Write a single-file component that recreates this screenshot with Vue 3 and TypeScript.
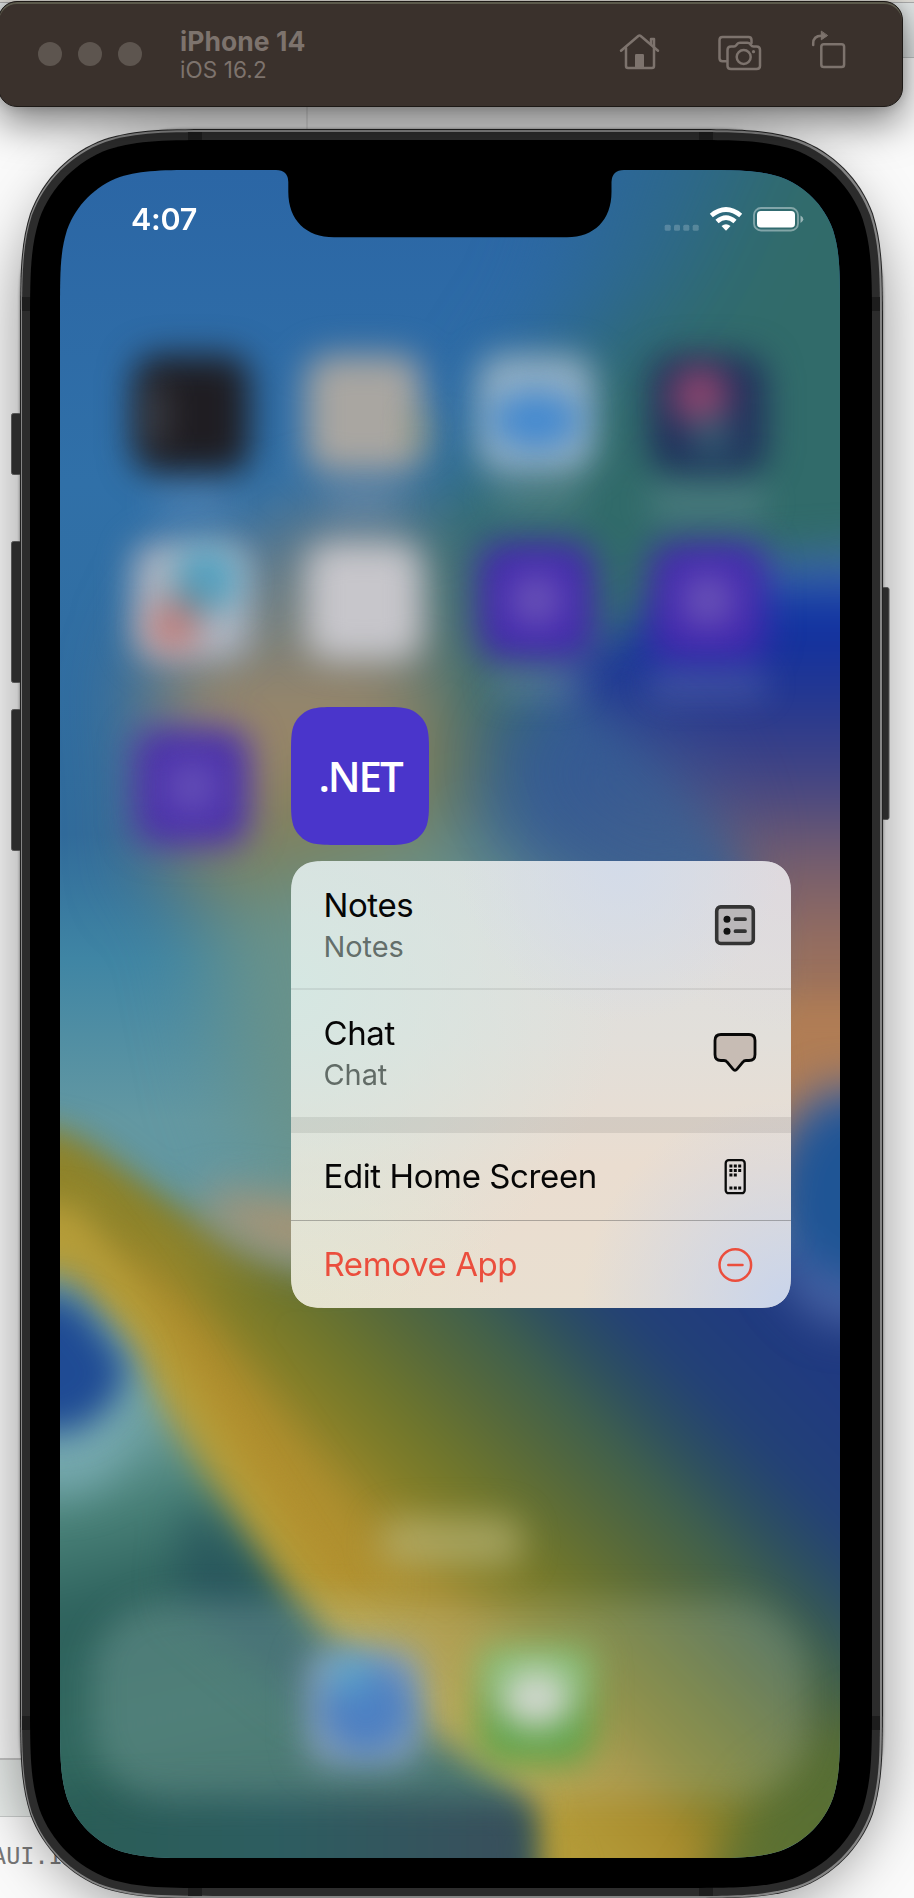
<script setup lang="ts">
interface AppTile { x: number; y: number; fill: string }
interface MenuItem { title: string; note?: string; icon: 'notes' | 'chat' | 'phone' | 'remove'; kind: string }

/* Rounded rectangle with continuous corners, as iOS draws them. */
function squircle(x: number, y: number, w: number, h: number, r: number): string {
  const a = 1.528665 * r, b = 1.088493 * r, c = 0.868407 * r, d = 0.631494 * r
  const e = 0.372824 * r, f = 0.16906 * r, g = 0.074911 * r
  const R = x + w, B = y + h
  return [
    `M${x + a} ${y}H${R - a}`,
    `C${R - b} ${y} ${R - c} ${y} ${R - d} ${y + g}C${R - e} ${y + f} ${R - f} ${y + e} ${R - g} ${y + d}C${R} ${y + c} ${R} ${y + b} ${R} ${y + a}`,
    `V${B - a}`,
    `C${R} ${B - b} ${R} ${B - c} ${R - g} ${B - d}C${R - f} ${B - e} ${R - e} ${B - f} ${R - d} ${B - g}C${R - c} ${B} ${R - b} ${B} ${R - a} ${B}`,
    `H${x + a}`,
    `C${x + b} ${B} ${x + c} ${B} ${x + d} ${B - g}C${x + e} ${B - f} ${x + f} ${B - e} ${x + g} ${B - d}C${x} ${B - c} ${x} ${B - b} ${x} ${B - a}`,
    `V${y + a}`,
    `C${x} ${y + b} ${x} ${y + c} ${x + g} ${y + d}C${x + f} ${y + e} ${x + e} ${y + f} ${x + d} ${y + g}C${x + c} ${y} ${x + b} ${y} ${x + a} ${y}Z`,
  ].join('')
}

const shell = squircle(20, 129, 863, 1769.5, 134)
const rim = squircle(21, 130, 861, 1768, 133)
const band = squircle(22, 132, 858, 1764, 132)
const bezel = squircle(30, 140, 842, 1748, 125)
const screenClip = `path('${squircle(0, 0, 780, 1688, 94.7)}')`
const iconClip = `path('${squircle(0, 0, 138, 138, 31)}')`
const menuClip = `path('${squircle(0, 0, 500, 447, 27)}')`

const tiles: AppTile[] = [
  { x: 192, y: 414, fill: '#1f1d22' },
  { x: 364, y: 414, fill: '#a9a6a1' },
  { x: 536, y: 414, fill: '#98b2c4' },
  { x: 708, y: 414, fill: '#20305c' },
  { x: 192, y: 601, fill: '#b2b7c2' },
  { x: 364, y: 601, fill: '#c7c6cb' },
  { x: 536, y: 601, fill: '#452aae' },
  { x: 708, y: 601, fill: '#452aae' },
  { x: 192, y: 787, fill: '#4b31ab' },
]

const items: MenuItem[] = [
  { title: 'Notes', note: 'Notes', icon: 'notes', kind: 'tall ruled' },
  { title: 'Chat', note: 'Chat', icon: 'chat', kind: 'tall section' },
  { title: 'Edit Home Screen', icon: 'phone', kind: 'hair' },
  { title: 'Remove App', icon: 'remove', kind: 'danger' },
]
</script>

<template>
  <div class="desktop">
    <div class="strip"></div>
    <div class="pane"><span class="code">AUI.I</span></div>
    <div class="divider"></div>
    <div class="phone-shadow"></div>
    <svg class="frame" viewBox="0 0 914 1898">
      <g fill="#2b2b2b" stroke="#555" stroke-width="1">
        <rect x="11.5" y="413.5" width="14" height="61" rx="2" />
        <rect x="11.5" y="541.5" width="14" height="141" rx="2" />
        <rect x="11.5" y="709.5" width="14" height="141" rx="2" />
        <rect x="876" y="587.5" width="13" height="232" rx="2" />
      </g>
      <path :d="shell" fill="#222" />
      <path :d="rim" fill="#858585" />
      <path :d="band" fill="#2c2c2c" />
      <g fill="#1d1d1d">
        <rect x="188" y="132" width="14" height="9" /><rect x="699" y="132" width="14" height="9" />
        <rect x="188" y="1887" width="14" height="9" /><rect x="699" y="1887" width="14" height="9" />
        <rect x="22" y="297" width="9" height="14" /><rect x="22" y="1716" width="9" height="14" />
        <rect x="871" y="297" width="9" height="14" /><rect x="871" y="1716" width="9" height="14" />
      </g>
      <path :d="bezel" fill="#000" />
    </svg>

    <header class="toolbar">
      <i class="light"></i><i class="light"></i><i class="light"></i>
      <div class="device">
        <div class="name">iPhone 14</div>
        <div class="os">iOS 16.2</div>
      </div>
      <svg class="tools" viewBox="610 20 250 70" fill="none" stroke="#7d736d" stroke-width="2.5" stroke-linecap="round" stroke-linejoin="round">
        <path d="M621 50.8 638.3 36Q639.5 35 640.7 36L658 50.8" />
        <path d="M626 48V66Q626 68 628 68H652Q654 68 654 66V39H651V44" />
        <path d="M635 68V55.2Q635 54 636.2 54H642.8Q644 54 644 55.2V68Z" fill="#7d736d" stroke="none" />
        <path d="M726 61.3H722.5Q719.5 61.3 719.5 58.3V40Q719.5 37 722.5 37H748.5Q751.5 37 751.5 40V43" />
        <path d="M731 46.5H734Q735.5 46.5 736.3 45.2L737.2 44Q738.2 42.7 740 42.7H747.5Q749.3 42.7 750.2 44L751 45.2Q751.8 46.5 753.5 46.5H756.5Q760 46.5 760 50V66Q760 69 756.5 69H731Q727.5 69 727.5 66V50Q727.5 46.5 731 46.5Z" />
        <circle cx="743.7" cy="57" r="7" /><circle cx="753.5" cy="51.7" r="1.6" fill="#7d736d" stroke="none" />
        <rect x="821.3" y="44.2" width="22.8" height="22.8" rx="2.6" />
        <path d="M813.2 45V43.5Q813.2 35.7 821.5 35.7" />
        <path d="M821.3 31.5V39.8L827.3 35.7Z" fill="#7d736d" stroke-width="1" />
      </svg>
    </header>

    <main class="screen" :style="{ clipPath: screenClip }">
      <svg class="wallpaper" viewBox="60 170 780 1688">
        <defs>
          <filter id="b14" filterUnits="userSpaceOnUse" x="-200" y="-100" width="1300" height="2200" color-interpolation-filters="sRGB"><feGaussianBlur stdDeviation="17" /></filter>
          <filter id="b22" filterUnits="userSpaceOnUse" x="-200" y="-100" width="1300" height="2200" color-interpolation-filters="sRGB"><feGaussianBlur stdDeviation="22" /></filter>
          <filter id="b40" filterUnits="userSpaceOnUse" x="-200" y="-100" width="1300" height="2200" color-interpolation-filters="sRGB"><feGaussianBlur stdDeviation="42" /></filter>
          <linearGradient id="sky" gradientUnits="userSpaceOnUse" x1="0" y1="170" x2="0" y2="1120">
            <stop offset="0" stop-color="#2b66a5" /><stop offset=".33" stop-color="#3070a8" /><stop offset=".7" stop-color="#316b9b" />
            <stop offset=".83" stop-color="#3f85a4" /><stop offset="1" stop-color="#6398a2" />
          </linearGradient>
          <linearGradient id="east" gradientUnits="userSpaceOnUse" x1="840" y1="540" x2="840" y2="1120">
            <stop offset="0" stop-color="#5585a8" /><stop offset=".05" stop-color="#3c68a8" /><stop offset=".13" stop-color="#0d30a4" /><stop offset=".28" stop-color="#26388f" />
            <stop offset=".42" stop-color="#464682" /><stop offset=".55" stop-color="#745d6e" /><stop offset=".7" stop-color="#966e5f" />
            <stop offset="1" stop-color="#b5804f" />
          </linearGradient>
          <linearGradient id="centre" gradientUnits="userSpaceOnUse" x1="560" y1="700" x2="600" y2="880">
            <stop offset="0" stop-color="#2a5799" /><stop offset=".5" stop-color="#385892" /><stop offset="1" stop-color="#4c658c" />
          </linearGradient>
          <linearGradient id="land" gradientUnits="userSpaceOnUse" x1="300" y1="1560" x2="655" y2="1205">
            <stop offset="0" stop-color="#b39a38" /><stop offset=".14" stop-color="#a98c2d" /><stop offset=".24" stop-color="#857f28" />
            <stop offset=".35" stop-color="#6f762c" /><stop offset=".48" stop-color="#56693b" /><stop offset=".6" stop-color="#40604c" />
            <stop offset=".7" stop-color="#2d4f60" /><stop offset=".81" stop-color="#234176" /><stop offset="1" stop-color="#203a80" />
          </linearGradient>
          <linearGradient id="teal" gradientUnits="userSpaceOnUse" x1="60" y1="1440" x2="160" y2="1858">
            <stop offset="0" stop-color="#6c9f9f" /><stop offset=".18" stop-color="#4a8279" /><stop offset=".4" stop-color="#2e625d" />
            <stop offset=".7" stop-color="#32685f" /><stop offset="1" stop-color="#2a5c56" />
          </linearGradient>
          <linearGradient id="base" gradientUnits="userSpaceOnUse" x1="60" y1="0" x2="540" y2="0">
            <stop offset="0" stop-color="#2a5d56" /><stop offset=".45" stop-color="#2d5d60" /><stop offset="1" stop-color="#3a4d5b" />
          </linearGradient>
        </defs>

        <rect x="0" y="100" width="900" height="1900" fill="url(#sky)" />
        <g filter="url(#b40)">
          <path d="M770 0H1000V620H650L520 800 400 820 430 620 440 500 560 400 660 260Z" fill="#316b6a" />
          <path d="M620 60H820L700 300 560 400 470 440 560 300Z" fill="#2d688a" opacity=".7" />
          <path d="M280 520 420 500 450 640 420 780 200 800 170 620Z" fill="#6e7d80" />
          <path d="M150 660 410 650 430 760 360 860 170 850Z" fill="#98866a" />
          <path d="M400 740 470 680 470 760 440 890 230 900 140 860Z" fill="#7d7f59" />
          <path d="M200 900 380 850 520 800 760 880 760 1320 320 1280 240 1100Z" fill="#69928a" />
          <path d="M600 620H860V900L720 960 560 900 470 830 520 700Z" fill="#385f92" />
        </g>
        <g filter="url(#b22)">
          <path d="M560 680 640 630 740 560 1000 545V1200H760V900L720 840 620 740Z" fill="url(#east)" />
        </g>
        <path d="M510 760 570 700 660 720 700 770 730 860 700 900 560 830Z" fill="url(#centre)" opacity=".75" filter="url(#b40)" />
        <g filter="url(#b14)">
          <path d="M0 1130 60 1135 150 1195 230 1245 330 1275 420 1250 760 1240H1000V2000H0Z" fill="url(#land)" />
        </g>
        <g filter="url(#b22)">
          <path d="M210 1190 330 1205 345 1262 270 1258 200 1215Z" fill="#b09570" opacity=".9" />
          <path d="M-20 1130 80 1150 170 1220 250 1290 190 1280 0 1190Z" fill="#8f842b" />
          <path d="M110 1230 180 1290 300 1470 390 1590 300 1610 200 1450Z" fill="#b38f2d" opacity=".75" />
          <path d="M880 1700V1920H680L760 1790Z" fill="#566e34" opacity=".85" />
        </g>
        <path d="M760 1000H900V1230H780Z" fill="#b07d55" filter="url(#b14)" />
        <g filter="url(#b22)">
          <ellipse cx="850" cy="1205" rx="84" ry="120" fill="#4b64a5" />
          <ellipse cx="858" cy="1192" rx="80" ry="92" fill="#1f5595" />
        </g>
        <g filter="url(#b14)">
          <path d="M-40 1215 75 1205 140 1290 240 1460 330 1600 400 1680 540 1785 580 1920H500L260 1620 150 1420 80 1270 -40 1275Z" fill="#b59d39" />
          <path d="M-40 1278 70 1276 118 1340 180 1435 280 1590 380 1700 500 1780 530 1810 530 1920H-40Z" fill="url(#teal)" />
        </g>
        <g filter="url(#b22)">
          <path d="M190 1500 290 1620 390 1740 300 1700 180 1600Z" fill="#29575d" />
          <ellipse cx="62" cy="1406" rx="74" ry="86" fill="#76a9af" />
        </g>
        <g filter="url(#b14)">
          <path d="M-20 1296H70L98 1325 128 1368 110 1408 74 1432H-20Z" fill="#1f4b94" />
          <path d="M-40 1800 300 1790 528 1800 532 1920H-40Z" fill="url(#base)" />
        </g>
        <g filter="url(#b14)"><rect x="92" y="1600" width="716" height="200" rx="76" fill="#c6e3e0" opacity=".2" /></g>
        <g filter="url(#b14)"><rect x="380" y="1517" width="142" height="50" rx="20" fill="#bbb87d" opacity=".62" /></g>

        <g filter="url(#b14)">
          <rect v-for="t in tiles" :key="`${t.x}-${t.y}`" :x="t.x - 58" :y="t.y - 59" width="116" height="118" rx="24" :fill="t.fill" />
          <rect x="306" y="1648" width="116" height="118" rx="24" fill="#869fb6" />
          <rect x="478" y="1646" width="116" height="118" rx="24" fill="#5fa44b" />
          <path d="M480 1646H592V1694H480Z" fill="#83bd75" />
        </g>
        <g filter="url(#b14)" opacity=".8">
          <rect x="146" y="385" width="18" height="60" fill="#55565c" />
          <ellipse cx="536" cy="420" rx="46" ry="30" fill="#2f7fd2" />
          <circle cx="700" cy="396" r="30" fill="#a84a73" />
          <circle cx="712" cy="438" r="22" fill="#376a78" />
          <circle cx="206" cy="580" r="34" fill="#3a9fc4" />
          <circle cx="174" cy="626" r="26" fill="#cb7068" />
          <circle cx="190" cy="600" r="18" fill="#55707c" opacity=".7" />
          <circle cx="536" cy="600" r="27" fill="#745fba" />
          <circle cx="708" cy="600" r="27" fill="#745fba" />
          <circle cx="192" cy="787" r="27" fill="#6b57ba" />
          <rect x="413" y="410" width="12" height="42" fill="#a5a15f" />
          <circle cx="366" cy="1708" r="46" fill="#3f78c6" />
          <circle cx="350" cy="1674" r="20" fill="#4fa8d0" />
          <ellipse cx="536" cy="1699" rx="37" ry="29" fill="#eee4f0" />
        </g>
        <g filter="url(#b14)" opacity=".2" fill="#cfd0e8">
          <rect x="155" y="490" width="74" height="26" /><rect x="327" y="490" width="74" height="26" />
          <rect x="492" y="485" width="90" height="26" /><rect x="650" y="490" width="116" height="26" />
          <rect x="492" y="672" width="90" height="26" /><rect x="650" y="672" width="116" height="26" />
        </g>
      </svg>

      <svg class="notch" viewBox="276 168 348 70">
        <path d="M276 168V170Q288 170 288.3 182V192C288.3 220 306 237.3 334 237.3H567C594 237.3 611.5 220 611.5 192V182Q612 170 624 170V168Z" fill="#000" />
      </svg>
      <div class="time">4:07</div>
      <svg class="status" viewBox="660 200 150 40">
        <g fill="#fff" opacity=".2">
          <rect x="664.7" y="224.7" width="6" height="6" rx="1.5" /><rect x="674" y="224.7" width="6" height="6" rx="1.5" />
          <rect x="683.3" y="224.7" width="6" height="6" rx="1.5" /><rect x="692.7" y="224.7" width="6" height="6" rx="1.5" />
        </g>
        <g fill="none" stroke="#fff" stroke-width="4.7">
          <path d="M711.3 215.5Q726 203.5 740.7 215.5" /><path d="M717 221.5Q726 213.7 735 221.5" />
        </g>
        <path d="M721.5 226Q726 222.5 730.5 226L726 230.7Z" fill="#fff" />
        <rect x="754" y="208" width="44" height="22.5" rx="7" fill="none" stroke="#fff" stroke-opacity=".4" stroke-width="1.8" />
        <rect x="757" y="211" width="38" height="16.5" rx="3.8" fill="#fff" />
        <path d="M800.5 215.5Q803.3 217 803.3 219.3T800.5 223Z" fill="#fff" opacity=".5" />
      </svg>

      <div class="app" :style="{ clipPath: iconClip }"><span>.NET</span></div>
      <div class="menu" :style="{ clipPath: menuClip }">
        <div v-for="item in items" :key="item.title" class="item" :class="item.kind">
          <div class="labels">
            <div class="title">{{ item.title }}</div>
            <div v-if="item.note" class="note">{{ item.note }}</div>
          </div>
          <svg class="glyph" viewBox="0 0 48 48">
            <template v-if="item.icon === 'notes'">
              <rect x="5.7" y="4.9" width="36.6" height="36.6" rx="4" fill="#bab7b9" stroke="#343434" stroke-width="3.6" />
              <circle cx="16" cy="17.2" r="3.5" fill="#111" /><circle cx="16" cy="29.2" r="3.5" fill="#111" />
              <path d="M24.5 17.2H34M24.5 29.2H34" stroke="#333" stroke-width="3.8" stroke-linecap="round" />
            </template>
            <path v-else-if="item.icon === 'chat'" d="M10 4.5H38Q44 4.5 44 10.5V24.5Q44 30.5 38 30.5H35Q33 30.5 32 32L26 39.2Q24 41.5 22 39.2L16 32Q15 30.5 13 30.5H10Q4 30.5 4 24.5V10.5Q4 4.5 10 4.5Z" fill="#c7bcb4" stroke="#080808" stroke-width="2.8" />
            <template v-else-if="item.icon === 'phone'">
              <rect x="14.7" y="7.2" width="19" height="33" rx="3" fill="none" stroke="#0a0a0a" stroke-width="2.3" />
              <path d="M18.4 13H30.2M18.4 17.5H30.2M18.4 22H26M18.4 35H30.2" stroke="#0a0a0a" stroke-width="3" stroke-dasharray="3 1.4" />
            </template>
            <g v-else fill="none" stroke="#eb4e3d" stroke-width="2.5" stroke-linecap="round">
              <circle cx="24.3" cy="24" r="15.8" /><path d="M17.3 24H31.5" />
            </g>
          </svg>
        </div>
      </div>
    </main>
  </div>
</template>

<style>
body { margin: 0; overflow: hidden; }
</style>

<style scoped>
.desktop {
  position: relative;
  width: 914px;
  height: 1898px;
  overflow: hidden;
  background: #fafafa;
  font-family: Inter, 'Liberation Sans', sans-serif;
}
.strip {
  box-sizing: border-box;
  height: 58px;
  background: #dfe3e3;
  border-top: 2px solid #dedcd6;
  border-bottom: 1px solid #bfc3c3;
  box-shadow: inset 0 1px #aaa;
}
.pane {
  position: absolute;
  left: 0;
  top: 1758px;
  width: 120px;
  height: 56px;
  background: #e7ebe9;
  border-top: 2px solid #c5c5c5;
  border-bottom: 1px solid #c8cbca;
}
.code {
  position: absolute;
  left: -8px;
  top: 81px;
  color: #777;
  font: 23.5px/30px 'DejaVu Sans Mono', monospace;
}
.divider {
  position: absolute;
  left: 306px;
  top: 100px;
  width: 2px;
  height: 40px;
  background: #e6e6e6;
}
.phone-shadow {
  position: absolute;
  left: 20px;
  top: 129px;
  width: 863px;
  height: 1769px;
  border-radius: 165px;
  box-shadow: 0 0 3px rgba(0, 0, 0, .5), 0 16px 60px rgba(0, 0, 0, .42);
}
.frame { position: absolute; left: 0; top: 0; width: 914px; height: 1898px; }
.toolbar {
  position: absolute;
  left: -2px;
  top: 1px;
  box-sizing: border-box;
  width: 905px;
  height: 106px;
  padding: 0 42px 0 39px;
  display: flex;
  align-items: center;
  gap: 16px;
  background: #3a312c;
  border: 1px solid #1d1916;
  border-radius: 19px;
  box-shadow: inset 0 2px #5c5a4c, 0 16px 40px rgba(0, 0, 0, .5), 0 0 12px rgba(0, 0, 0, .16);
}
.light { flex: none; width: 24px; height: 24px; border-radius: 50%; background: #5d554f; }
.device { margin-left: 22px; color: #7d736d; white-space: nowrap; }
.name { font-size: 26.5px; line-height: 32px; font-weight: 700; letter-spacing: .05px; margin-top: -1px; }
.os { font-size: 22.5px; line-height: 26px; letter-spacing: .1px; }
.tools { width: 250px; height: 70px; margin: 1px 0 0 auto; flex: none; }

.screen { position: absolute; left: 60px; top: 170px; width: 780px; height: 1688px; }
.wallpaper { display: block; width: 780px; height: 1688px; }
.notch { position: absolute; left: 216px; top: -2px; width: 348px; height: 70px; }
.time {
  position: absolute;
  left: 71px;
  top: 29px;
  color: #fff;
  font-size: 30.5px;
  line-height: 40px;
  font-weight: 600;
  letter-spacing: -.3px;
}
.status { position: absolute; left: 600px; top: 30px; width: 150px; height: 40px; }
.app {
  position: absolute;
  left: 231px;
  top: 537px;
  width: 138px;
  height: 138px;
  display: flex;
  align-items: center;
  justify-content: center;
  background: #4a35cb;
  color: #fff;
  font: 600 42px/50px 'Open Sans', sans-serif;
  letter-spacing: -2.1px;
}
.menu {
  position: absolute;
  left: 231px;
  top: 691px;
  width: 500px;
  height: 447px;
  display: flex;
  flex-direction: column;
  background:
    radial-gradient(circle at 100% 100%, #c8d4ec 0, rgba(200, 212, 236, 0) 210px),
    radial-gradient(circle at 66% 0, #d3dbe9 0, rgba(211, 219, 233, 0) 160px),
    radial-gradient(circle at 0 28%, #d5e7e2 0, rgba(213, 231, 226, 0) 330px),
    radial-gradient(circle at 100% 0, #dfd9de 0, rgba(223, 217, 222, 0) 170px),
    radial-gradient(circle at 0 100%, #e6e4cf 0, rgba(230, 228, 207, 0) 220px),
    linear-gradient(#dcdedf 0, #e2dfda 40%, #eaddd0 68%, #e9dfd0);
}
.item {
  box-sizing: border-box;
  display: flex;
  align-items: center;
  justify-content: space-between;
  padding: 0 32px 0 32.5px;
  flex: 0 0 87px;
  color: #060606;
}
.item.tall { flex-basis: 128px; }
.item.ruled { flex-basis: 129px; padding-top: 2px; border-bottom: 2px solid rgba(0, 0, 0, .07); }
.item.section { flex-basis: 143px; padding-top: 1px; border-bottom: 16px solid rgba(0, 0, 0, .08); }
.item.hair { flex-basis: 88px; border-bottom: 1px solid rgba(60, 60, 60, .36); }
.item.danger { color: #eb4e3d; }
.title { font-size: 33px; line-height: 41px; letter-spacing: -.4px; white-space: nowrap; }
.note { font-size: 29px; line-height: 41px; letter-spacing: -.1px; color: rgba(40, 50, 46, .68); }
.glyph { width: 48px; height: 48px; flex: none; }
</style>
